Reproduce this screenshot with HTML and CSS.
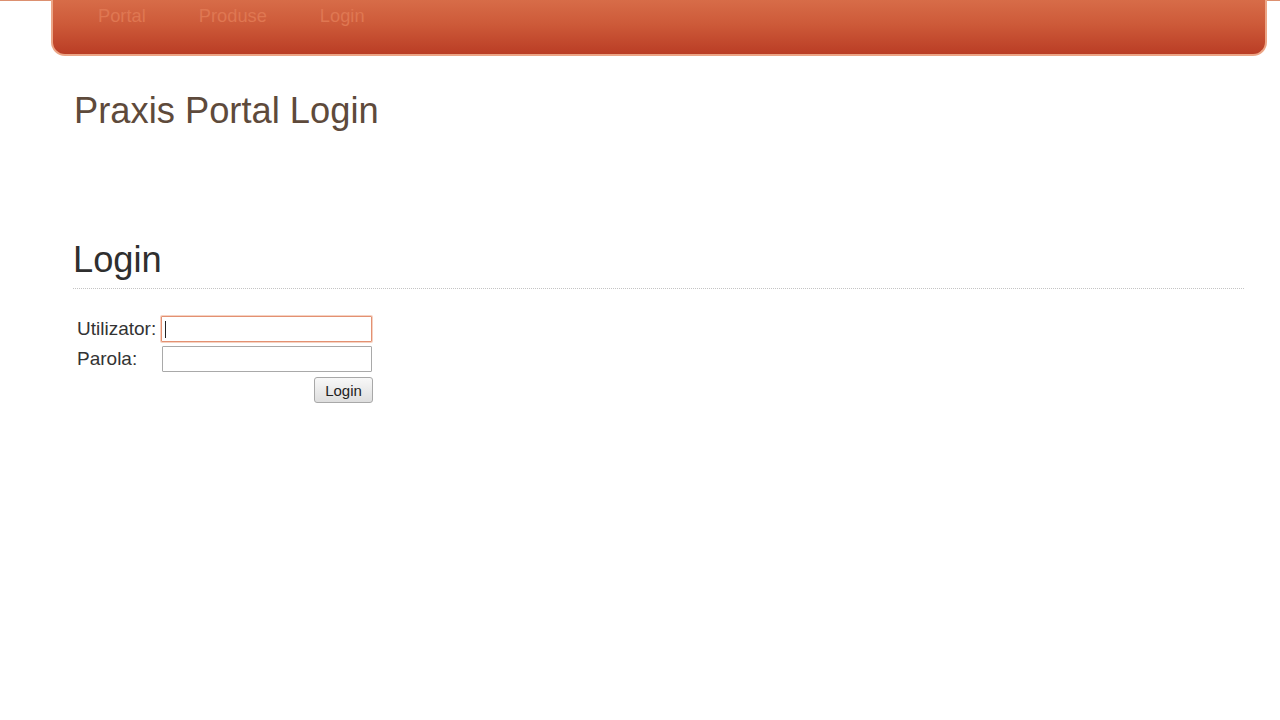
FILE: index.html
```html
<!DOCTYPE html>
<html lang="ro">
<head>
<meta charset="utf-8">
<title>Praxis Portal Login</title>
<link rel="stylesheet" href="styles.css">
</head>
<body>
<header class="topline">
  <nav class="navbar">
    <a class="nav-link" href="#">Portal</a>
    <a class="nav-link" href="#">Produse</a>
    <a class="nav-link" href="#">Login</a>
  </nav>
</header>
<main class="content">
  <h1 class="site-title">Praxis Portal Login</h1>
  <h2 class="section-title">Login</h2>
  <form class="login-form">
    <label class="field-label" for="user">Utilizator:</label>
    <span class="input-wrap">
      <input class="text-input is-focused" id="user" type="text">
      <span class="caret"></span>
    </span>
    <label class="field-label" for="pass">Parola:</label>
    <span class="input-wrap">
      <input class="text-input" id="pass" type="password">
    </span>
    <button class="login-btn" type="button">Login</button>
  </form>
</main>
</body>
</html>
```
FILE: styles.css
```css
html, body {
  margin: 0;
  padding: 0;
  background: #ffffff;
  font-family: "Liberation Sans", Arial, sans-serif;
}

.topline {
  border-top: 1px solid #dc9070;
  padding: 0 13px 0 51px;
}

.navbar {
  height: 49px;
  margin-top: -1px;
  border: 2px solid #eca586;
  border-top: none;
  border-radius: 0 0 14px 14px;
  background: linear-gradient(to bottom, #d76c48 0%, #cd5a39 45%, #ba3d25 100%);
  display: flex;
  align-items: flex-start;
  gap: 53px;
  padding: 5px 0 0 45px;
  box-sizing: content-box;
}

.nav-link {
  font-size: 18.3px;
  line-height: 22px;
  color: #df7752;
  text-decoration: none;
}

.content {
  padding: 0 36px 0 74px;
}

.site-title {
  margin: 35px 0 0 0;
  font-size: 36.3px;
  line-height: 40px;
  font-weight: normal;
  color: #5e4a3b;
}

.section-title {
  margin: 109px 0 0 -1px;
  font-size: 36.3px;
  line-height: 40px;
  font-weight: normal;
  color: #2f2f2f;
  padding-bottom: 8px;
  border-bottom: 1px dotted #c4c4c4;
}

.login-form {
  margin-top: 27px;
  padding-left: 3px;
  display: grid;
  grid-template-columns: 85px 211px;
  row-gap: 4px;
  align-items: center;
}

.field-label {
  font-size: 19px;
  color: #333333;
  line-height: 26px;
}

.input-wrap {
  position: relative;
  display: block;
  height: 26px;
}

.text-input {
  display: block;
  box-sizing: border-box;
  width: 210px;
  height: 26px;
  margin: 0;
  border: 1px solid #a9a9a9;
  border-radius: 1px;
  background: #fff;
  padding: 2px 3px;
  font-family: "Liberation Sans", Arial, sans-serif;
  font-size: 15px;
  outline: none;
}

.text-input.is-focused {
  border: 1px solid #e39172;
  box-shadow: 0 0 0 1px #f6d2c2;
  width: 211px;
  margin-left: -1px;
}

.caret {
  position: absolute;
  left: 3px;
  top: 5px;
  width: 1px;
  height: 17px;
  background: #222;
}

.login-btn {
  grid-column: 2;
  justify-self: end;
  margin-right: 0;
  width: 59px;
  height: 26px;
  box-sizing: border-box;
  margin-top: 1px;
  border: 1px solid #a8a8a8;
  border-radius: 3px;
  background: linear-gradient(to bottom, #f8f8f8, #dedede);
  font-family: "Liberation Sans", Arial, sans-serif;
  font-size: 15px;
  color: #222;
  padding: 0;
}
```
